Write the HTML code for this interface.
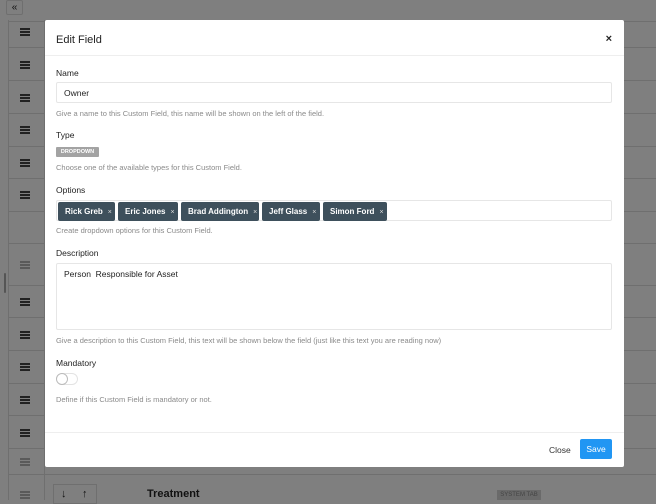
<!DOCTYPE html><html><head><style>
*{box-sizing:border-box;margin:0;padding:0}
body{width:656px;height:500px;overflow:hidden;background:#7f7f7f;font-family:"Liberation Sans",sans-serif;position:relative}
.row{position:absolute;left:8px;right:0;height:1px;background:#6f6f6f}
.vl{position:absolute;top:12px;bottom:0;width:1px;background:#6f6f6f}
.hb{position:absolute;left:20px;width:10px;height:2px;background:#222;box-shadow:0 3px 0 #222,0 6px 0 #222}
.hb.l{background:#5a5a5a;box-shadow:0 3px 0 #5a5a5a,0 6px 0 #5a5a5a}
.modal{position:absolute;left:45px;top:20px;width:579px;height:447px;background:#fff;border-radius:2px}
.t{position:absolute;font-size:8.5px;color:#222}
.h{position:absolute;font-size:7.5px;color:#8a8a8a}
.in{position:absolute;left:11px;width:556px;border:1px solid #e6e6e6;border-radius:2px}
.tag{position:absolute;top:182px;height:19px;background:#3e505c;color:#fff;font-size:8px;font-weight:bold;line-height:19px;padding-left:7px;border-radius:2px}
.tag span{font-weight:normal;font-size:7px;margin-left:5px;color:#ddd}
</style></head><body>
<div style="position:absolute;left:6px;top:0;width:17px;height:15px;border:1px solid #6f6f6f;border-radius:2px;font-size:10px;color:#111;text-align:center;line-height:13px">«</div>
<div class="vl" style="left:8px;top:20px"></div><div class="vl" style="left:44px;top:20px"></div>
<div class="row" style="top:21px"></div><div class="row" style="top:47px"></div><div class="row" style="top:80px"></div><div class="row" style="top:113px"></div><div class="row" style="top:146px"></div><div class="row" style="top:178px"></div><div class="row" style="top:211px"></div><div class="row" style="top:243px"></div><div class="row" style="top:285px"></div><div class="row" style="top:317px"></div><div class="row" style="top:350px"></div><div class="row" style="top:383px"></div><div class="row" style="top:415px"></div><div class="row" style="top:448px"></div><div class="row" style="top:474px"></div>
<div class="hb" style="top:28px"></div><div class="hb" style="top:61px"></div><div class="hb" style="top:94px"></div><div class="hb" style="top:126px"></div><div class="hb" style="top:159px"></div><div class="hb" style="top:191px"></div><div class="hb l" style="top:261px"></div><div class="hb" style="top:298px"></div><div class="hb" style="top:331px"></div><div class="hb" style="top:363px"></div><div class="hb" style="top:396px"></div><div class="hb" style="top:429px"></div><div class="hb l" style="top:458px"></div><div class="hb l" style="top:491px"></div>
<div style="position:absolute;left:4px;top:273px;width:2px;height:20px;background:#555;border-radius:1px"></div>
<div style="position:absolute;left:53px;top:484px;width:44px;height:20px;border:1px solid #6f6f6f;font-size:11px;color:#111;line-height:18px"><span style="position:absolute;left:7px">↓</span><span style="position:absolute;left:28px">↑</span></div>
<div style="position:absolute;left:147px;top:488px;font-size:11px;font-weight:bold;color:#111">Treatment</div>
<div style="position:absolute;left:497px;top:490px;width:44px;height:10px;background:#6a6a6a;color:#444;font-size:6px;text-align:center;line-height:10px">SYSTEM TAB</div>
<div class="modal">
<div style="position:absolute;left:11px;top:14px;font-size:11px;color:#222">Edit Field</div>
<div style="position:absolute;right:12px;top:13px;font-size:11px;font-weight:bold;color:#222">×</div>
<div style="position:absolute;left:0;right:0;top:35px;height:1px;background:#eee"></div>
<div class="t" style="left:11px;top:48px">Name</div>
<div class="in" style="top:62px;height:21px"><span class="t" style="left:7px;top:5px">Owner</span></div>
<div class="h" style="left:11px;top:89px">Give a name to this Custom Field, this name will be shown on the left of the field.</div>
<div class="t" style="left:11px;top:110px">Type</div>
<div style="position:absolute;left:11px;top:127px;width:43px;height:10px;background:#a3a3a3;color:#fff;font-size:5.5px;font-weight:bold;text-align:center;line-height:10px;border-radius:1px">DROPDOWN</div>
<div class="h" style="left:11px;top:143px">Choose one of the available types for this Custom Field.</div>
<div class="t" style="left:11px;top:165px">Options</div>
<div class="in" style="top:180px;height:21px"></div>
<div class="tag" style="left:13px;width:57px">Rick Greb<span>×</span></div>
<div class="tag" style="left:73px;width:60px">Eric Jones<span>×</span></div>
<div class="tag" style="left:136px;width:78px">Brad Addington<span>×</span></div>
<div class="tag" style="left:217px;width:58px">Jeff Glass<span>×</span></div>
<div class="tag" style="left:278px;width:64px">Simon Ford<span>×</span></div>
<div class="h" style="left:11px;top:206px">Create dropdown options for this Custom Field.</div>
<div class="t" style="left:11px;top:228px">Description</div>
<div class="in" style="top:243px;height:67px"><span class="t" style="left:7px;top:5px">Person&nbsp; Responsible for Asset</span></div>
<div class="h" style="left:11px;top:316px">Give a description to this Custom Field, this text will be shown below the field (just like this text you are reading now)</div>
<div class="t" style="left:11px;top:338px">Mandatory</div>
<div style="position:absolute;left:11px;top:353px;width:22px;height:12px;border:1px solid #e3e3e3;border-radius:6px"><div style="position:absolute;left:-1px;top:-1px;width:12px;height:12px;border-radius:50%;border:1px solid #bbb;background:#fff"></div></div>
<div class="h" style="left:11px;top:375px">Define if this Custom Field is mandatory or not.</div>
<div style="position:absolute;left:0;right:0;top:412px;height:1px;background:#eee"></div>
<div class="t" style="left:504px;top:425px;color:#333">Close</div>
<div style="position:absolute;left:535px;top:419px;width:32px;height:20px;background:#2196f3;color:#fff;font-size:8.5px;text-align:center;line-height:20px;border-radius:2px">Save</div>
</div>
</body></html>
